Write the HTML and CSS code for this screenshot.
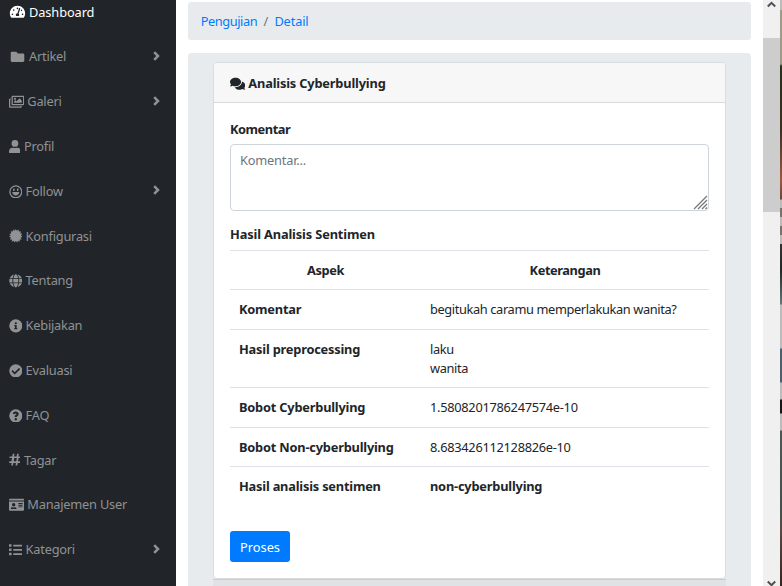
FILE: index.html
```html
<!DOCTYPE html>
<html lang="id">
<head>
<meta charset="utf-8">
<title>Detail Pengujian</title>
<link rel="stylesheet" href="styles.css">
</head>
<body>
<div class="app">
<nav class="sidebar">
<a class="item active"><svg class="icon fixed" viewBox="0 0 576 512"><path d="M288 32C129 32 0 161 0 320c0 53 14 102 39 145 6 9 16 15 27 15h444c11 0 21-6 27-15 25-43 39-92 39-145C576 161 447 32 288 32zm0 64c18 0 32 14 32 32s-14 32-32 32-32-14-32-32 14-32 32-32zM96 384c-18 0-32-14-32-32s14-32 32-32 32 14 32 32-14 32-32 32zm48-160c-18 0-32-14-32-32s14-32 32-32 32 14 32 32-14 32-32 32zm247-77-61 184c13 12 22 29 22 48 0 14-4 26-11 37H235c-7-11-11-23-11-37 0-35 29-64 61-64l61-183c4-13 18-20 30-15 13 4 19 17 15 30zm23 73 15-46c1 0 2-1 3-1 18 0 32 14 32 32s-14 32-32 32c-7 0-13-7-18-17zm66 164c-18 0-32-14-32-32s14-32 32-32 32 14 32 32-14 32-32 32z"/></svg><span>Dashboard</span></a>
<a class="item"><svg class="icon fixed" viewBox="0 0 512 512"><path d="M464 128H272l-64-64H48C21 64 0 85 0 112v288c0 27 21 48 48 48h416c27 0 48-21 48-48V176c0-27-21-48-48-48z"/></svg><span>Artikel</span><svg class="chevron" viewBox="0 0 7 10"><path d="M1.200 1.200 5 5 1.200 8.800"/></svg></a>
<a class="item"><svg class="icon wide" viewBox="0 0 576 512"><path fill-rule="evenodd" d="M480 416v16c0 27-21 48-48 48H48c-27 0-48-21-48-48V176c0-27 21-48 48-48h16v48H54c-3 0-6 3-6 6v244c0 3 3 6 6 6h372c3 0 6-3 6-6v-10h48zM144 32h384c27 0 48 21 48 48v256c0 27-21 48-48 48H144c-27 0-48-21-48-48V80c0-27 21-48 48-48zm6 48c-3 0-6 3-6 6v244c0 3 3 6 6 6h372c3 0 6-3 6-6V86c0-3-3-6-6-6H150zm74 24a40 40 0 1 1 0 80 40 40 0 0 1 0-80zm-32 136 40-40c4-4 12-4 16 0l40 40 104-104c4-4 12-4 16 0l72 72v80H192v-48z"/></svg><span>Galeri</span><svg class="chevron" viewBox="0 0 7 10"><path d="M1.200 1.200 5 5 1.200 8.800"/></svg></a>
<a class="item"><svg class="icon narrow" viewBox="0 0 448 512"><path d="M224 256a128 128 0 1 0 0-256 128 128 0 0 0 0 256zm90 32h-17a174 174 0 0 1-146 0h-17C60 288 0 348 0 422v42c0 27 21 48 48 48h352c27 0 48-21 48-48v-42c0-74-60-134-134-134z"/></svg><span>Profil</span></a>
<a class="item"><svg class="icon" viewBox="0 0 496 512"><path fill-rule="evenodd" d="M248 8a248 248 0 1 0 0 496 248 248 0 0 0 0-496zm0 48a200 200 0 1 1 0 400 200 200 0 0 1 0-400zM176 128c-18 0-32 20-32 48s14 48 32 48 32-20 32-48-14-48-32-48zm144 0c-18 0-32 20-32 48s14 48 32 48 32-20 32-48-14-48-32-48zM362 264c10 0 18 8 16 18-9 62-65 110-130 110s-121-48-130-110c-2-10 6-18 16-18h228z"/></svg><span>Follow</span><svg class="chevron" viewBox="0 0 7 10"><path d="M1.200 1.200 5 5 1.200 8.800"/></svg></a>
<a class="item"><svg class="icon" viewBox="0 0 512 512"><path d="m256 0 38 62 66-44 11 79 79-11-24 76 76 24-54 54 64 46-74 38 42 68-79 5 5 79-70-38-24 74-56-56-56 56-24-74-70 38 5-79-79-5 42-68-74-38 64-46-54-54 76-24-24-76 79 11 11-79 66 44z"/></svg><span>Konfigurasi</span></a>
<a class="item"><svg class="icon" viewBox="0 0 496 512"><path d="M336 160C322 71 288 8 248 8s-74 63-88 152h176zM152 256c0 22 1 44 3 64h186a670 670 0 0 0 0-128H155c-2 20-3 42-3 64zm325-96C448 92 390 39 318 18c25 34 42 85 50 142h109zM178 18C106 39 48 92 19 160h109c8-57 25-108 50-142zm309 174H373a690 690 0 0 1 0 128h114a250 250 0 0 0 0-128zM120 256c0-22 1-43 3-64H9a250 250 0 0 0 0 128h114c-2-21-3-42-3-64zm40 96c14 89 48 152 88 152s74-63 88-152H160zm158 142c72-21 130-74 159-142H368c-8 57-25 108-50 142zM19 352c29 68 87 121 159 142-25-34-42-85-50-142H19z"/></svg><span>Tentang</span></a>
<a class="item"><svg class="icon" viewBox="0 0 512 512"><path fill-rule="evenodd" d="M256 8a248 248 0 1 0 0 496 248 248 0 0 0 0-496zm0 110a42 42 0 1 1 0 84 42 42 0 0 1 0-84zm56 254c0 7-5 12-12 12h-88c-7 0-12-5-12-12v-24c0-7 5-12 12-12h12v-64h-12c-7 0-12-5-12-12v-24c0-7 5-12 12-12h64c7 0 12 5 12 12v100h12c7 0 12 5 12 12v24z"/></svg><span>Kebijakan</span></a>
<a class="item"><svg class="icon" viewBox="0 0 512 512"><path fill-rule="evenodd" d="M256 8a248 248 0 1 0 0 496 248 248 0 0 0 0-496zm-29 379 184-184c6-6 6-16 0-23l-22-22c-7-7-17-7-23 0L216 308l-70-70c-6-7-16-7-23 0l-22 22c-6 7-6 17 0 23l104 104c6 6 16 6 22 0z"/></svg><span>Evaluasi</span></a>
<a class="item"><svg class="icon" viewBox="0 0 512 512"><path fill-rule="evenodd" d="M256 8a248 248 0 1 0 0 496 248 248 0 0 0 0-496zm6 82c54 0 102 42 102 97 0 74-64 75-64 100v5c0 7-5 12-12 12h-64c-7 0-12-5-12-12v-9c0-62 74-63 74-92 0-15-17-25-34-25-20 0-32 10-49 31-4 5-12 6-17 2l-40-29c-5-4-6-11-3-16 28-42 64-64 119-64zm-6 248a46 46 0 1 1 0 92 46 46 0 0 1 0-92z"/></svg><span>FAQ</span></a>
<a class="item"><svg class="icon narrow" viewBox="0 0 448 512"><path fill-rule="evenodd" d="m441 182 7-40c1-7-5-14-12-14h-83l15-82c2-7-4-14-12-14h-40c-6 0-11 4-12 10l-16 86h-98l15-82c1-7-5-14-12-14h-40c-6 0-11 4-12 10l-16 86H37c-6 0-11 4-12 10l-7 40c-1 7 5 14 12 14h84l-22 120H24c-6 0-11 4-12 10l-7 40c-1 7 5 14 12 14h83l-15 82c-2 7 4 14 12 14h40c6 0 11-4 12-10l16-86h98l-15 82c-1 7 5 14 12 14h40c6 0 11-4 12-10l16-86h88c6 0 11-4 12-10l7-40c1-7-5-14-12-14h-84l22-120h68c6 0 11-4 12-10zM275 312h-98l22-120h98z"/></svg><span>Tagar</span></a>
<a class="item"><svg class="icon wide" viewBox="0 0 576 512"><path fill-rule="evenodd" d="M528 32H48C21 32 0 53 0 80v16h576V80c0-27-21-48-48-48zM0 432c0 27 21 48 48 48h480c27 0 48-21 48-48V128H0v304zm352-232c0-4 4-8 8-8h144c4 0 8 4 8 8v16c0 4-4 8-8 8H360c-4 0-8-4-8-8v-16zm0 64c0-4 4-8 8-8h144c4 0 8 4 8 8v16c0 4-4 8-8 8H360c-4 0-8-4-8-8v-16zm0 64c0-4 4-8 8-8h144c4 0 8 4 8 8v16c0 4-4 8-8 8H360c-4 0-8-4-8-8v-16zM176 192a64 64 0 1 1 0 128 64 64 0 0 1 0-128zM67 396c8-26 33-44 61-44h8c25 11 55 11 80 0h8c28 0 53 18 61 44 3 10-5 20-16 20H83c-11 0-19-10-16-20z"/></svg><span>Manajemen User</span></a>
<a class="item"><svg class="icon" viewBox="0 0 512 512"><path d="M16 48h64c9 0 16 7 16 16v64c0 9-7 16-16 16H16c-9 0-16-7-16-16V64c0-9 7-16 16-16zm0 160h64c9 0 16 7 16 16v64c0 9-7 16-16 16H16c-9 0-16-7-16-16v-64c0-9 7-16 16-16zm0 160h64c9 0 16 7 16 16v64c0 9-7 16-16 16H16c-9 0-16-7-16-16v-64c0-9 7-16 16-16zM176 64h320c9 0 16 7 16 16v32c0 9-7 16-16 16H176c-9 0-16-7-16-16V80c0-9 7-16 16-16zm0 160h320c9 0 16 7 16 16v32c0 9-7 16-16 16H176c-9 0-16-7-16-16v-32c0-9 7-16 16-16zm0 160h320c9 0 16 7 16 16v32c0 9-7 16-16 16H176c-9 0-16-7-16-16v-32c0-9 7-16 16-16z"/></svg><span>Kategori</span><svg class="chevron" viewBox="0 0 7 10"><path d="M1.200 1.200 5 5 1.200 8.800"/></svg></a>
</nav>
<main class="content">
<div class="breadcrumb"><a class="crumb-first">Pengujian</a><span class="slash">/</span><a class="crumb-last">Detail</a></div>
<section class="panel">
<div class="card">
<header class="card-header"><svg class="comments" viewBox="0 0 576 512"><path d="M416 192c0-88-93-160-208-160S0 104 0 192c0 34 14 66 38 92-13 30-36 55-36 55-2 3-3 6-1 9s4 5 7 5c37 0 67-12 89-25 32 15 70 24 111 24 115 0 208-72 208-160zm122 220c24-26 38-58 38-92 0-67-53-124-129-148 1 7 1 13 1 20 0 106-108 192-240 192-11 0-21-1-32-2 32 58 105 98 192 98 41 0 79-9 111-24 22 13 52 24 89 24 3 0 6-2 7-5s1-6-1-8c0 0-23-25-36-55z"/></svg><span class="title">Analisis Cyberbullying</span></header>
<div class="card-body">
<label class="label">Komentar</label>
<div class="textarea"><span>Komentar...</span><svg class="grip" viewBox="0 0 15 15"><path d="M1 14 14 1M5 14l9-9M9 14l5-5M12.500 14l1.500-1.500"/></svg></div>
<label class="label result">Hasil Analisis Sentimen</label>
<table>
<colgroup><col class="aspect"><col></colgroup>
<tr class="head"><th>Aspek</th><th>Keterangan</th></tr>
<tr><th>Komentar</th><td>begitukah caramu memperlakukan wanita?</td></tr>
<tr><th>Hasil preprocessing</th><td>laku<br>wanita</td></tr>
<tr><th>Bobot Cyberbullying</th><td class="number">1.5808201786247574e-10</td></tr>
<tr><th>Bobot Non-cyberbullying</th><td class="number">8.683426112128826e-10</td></tr>
<tr><th>Hasil analisis sentimen</th><td><b>non-cyberbullying</b></td></tr>
</table>
<button class="button">Proses</button>
</div>
</div>
<div class="next-card"></div>
</section>
</main>
<div class="scrollbar"><svg class="arrow" viewBox="0 0 9 7"><path d="M.8 5.500 4.500 1.800l3.700 3.700"/></svg><div class="thumb"></div><svg class="arrow bottom" viewBox="0 0 9 7"><path d="M.8 1.500 4.500 5.200l3.700-3.700"/></svg></div>
<div class="edge"></div>
</div>
</body>
</html>
```

FILE: styles.css
```css
* { box-sizing: border-box; }
body {
  margin: 0;
  background: #fff;
  color: #212529;
  font: 12.8px/19.2px "Noto Sans", sans-serif;
  overflow: hidden;
}
.app { display: flex; width: 782px; height: 586px; overflow: hidden; }
.sidebar {
  width: 176px;
  flex: none;
  padding: 0 16px 0 8.600px;
  margin-top: -10.200px;
  background: #212529;
  color: #909294;
  letter-spacing: -.22px;
}
.item { display: flex; align-items: center; height: 44.800px; }
.active { color: #fff; letter-spacing: -.1px; }
.icon { width: 13.600px; height: 13.600px; margin-right: 3.400px; flex: none; fill: currentColor; }
.icon.fixed { width: 17px; }
.icon.wide { width: 15.300px; }
.icon.narrow { width: 11.900px; }
.chevron { width: 7px; height: 10px; margin-left: auto; margin-top: -2px; fill: none; stroke: currentColor; stroke-width: 2.500; }
.content { width: 587px; flex: none; padding: 2px 12px 0; }
.breadcrumb {
  display: flex;
  height: 38px;
  padding: 9.600px 12.800px;
  border-radius: 3px;
  background: #e8ebee;
  color: #007bff;
  letter-spacing: -.45px;
}
.slash { color: #6c757d; padding: 0 6.500px; }
.crumb-last { letter-spacing: -.15px; }
.panel {
  height: 560px;
  margin-top: 13px;
  padding: 9px 25px 0;
  border-radius: 4px 4px 0 0;
  background: #e8ebee;
}
.card {
  height: 517px;
  border: 1px solid #dadcde;
  border-radius: 4px;
  background: #fff;
  overflow: hidden;
}
.card-header {
  display: flex;
  align-items: center;
  height: 40px;
  padding: 2px 16px 0;
  border-bottom: 1px solid #d9d9da;
  background: #f7f7f7;
  font-weight: 700;
  letter-spacing: -.17px;
}
.comments { width: 15.300px; height: 13.600px; margin-right: 3px; fill: #212529; }
.card-body { padding: 17px 16px 0; }
.label { display: block; font-weight: 700; letter-spacing: -.45px; }
.label.result { letter-spacing: -.14px; }
.textarea {
  display: flex;
  justify-content: space-between;
  height: 67px;
  margin: 5px 0 13.400px;
  padding: 6px 0 0 9px;
  border: 1px solid #ced4da;
  border-radius: 4px;
  color: #6c757d;
  letter-spacing: -.2px;
}
.grip { width: 15px; height: 15px; align-self: flex-end; margin: 0; fill: none; stroke: #777; stroke-width: 1.300; }
table { width: 100%; margin-top: 6px; border-collapse: separate; border-spacing: 0; table-layout: fixed; }
.aspect { width: 191px; }
th, td { border-top: 1px solid #dee2e6; padding: 10.300px 9px 8.900px; text-align: left; vertical-align: top; }
th, b { letter-spacing: -.2px; }
td { letter-spacing: -.37px; }
.number { letter-spacing: -.28px; }
.head th { text-align: center; letter-spacing: -.4px; }
.button {
  display: block;
  height: 31px;
  width: 60px;
  margin-top: 25.400px;
  padding: 1px 0 0;
  border: 0;
  border-radius: 3px;
  background: #007bff;
  color: #fff;
  font: 12.8px/31px "Noto Sans", sans-serif;
}
.next-card { height: 8px; border-top: 1px solid #c9cbcd; background: #e0e3e6; }
.scrollbar {
  display: flex;
  flex-direction: column;
  align-items: center;
  width: 17px;
  height: 586px;
  flex: none;
  background: #f0f0f0;
}
.arrow { width: 9px; height: 7px; margin-top: 1px; fill: none; stroke: #505050; stroke-width: 2; }
.thumb { width: 17px; height: 174px; margin-top: 30px; background: #cdcdcd; }
.bottom { margin: auto 0 -1px; }
.edge {
  width: 2px;
  height: 586px;
  background: linear-gradient(#bbb 0 10px, #9b9b86 10px 64px, #26301c 66px, #3b3020 130px, #995c3c 180px, #64483a 199px, #bbb 200px 208px, #77726c 208px 217px, #bbb 217px 226px, #77726c 226px 235px, #bbb 235px 244px, #333 244px, #202923 270px, #627779 304px, #bbb 305px 348px, #49616c 349px 382px, #bbb 383px 399px, #151515 400px 413px, #bbb 414px 430px, #4d5854 431px, #46504b 510px, #574a43 530px, #34251f 586px);
}
```
